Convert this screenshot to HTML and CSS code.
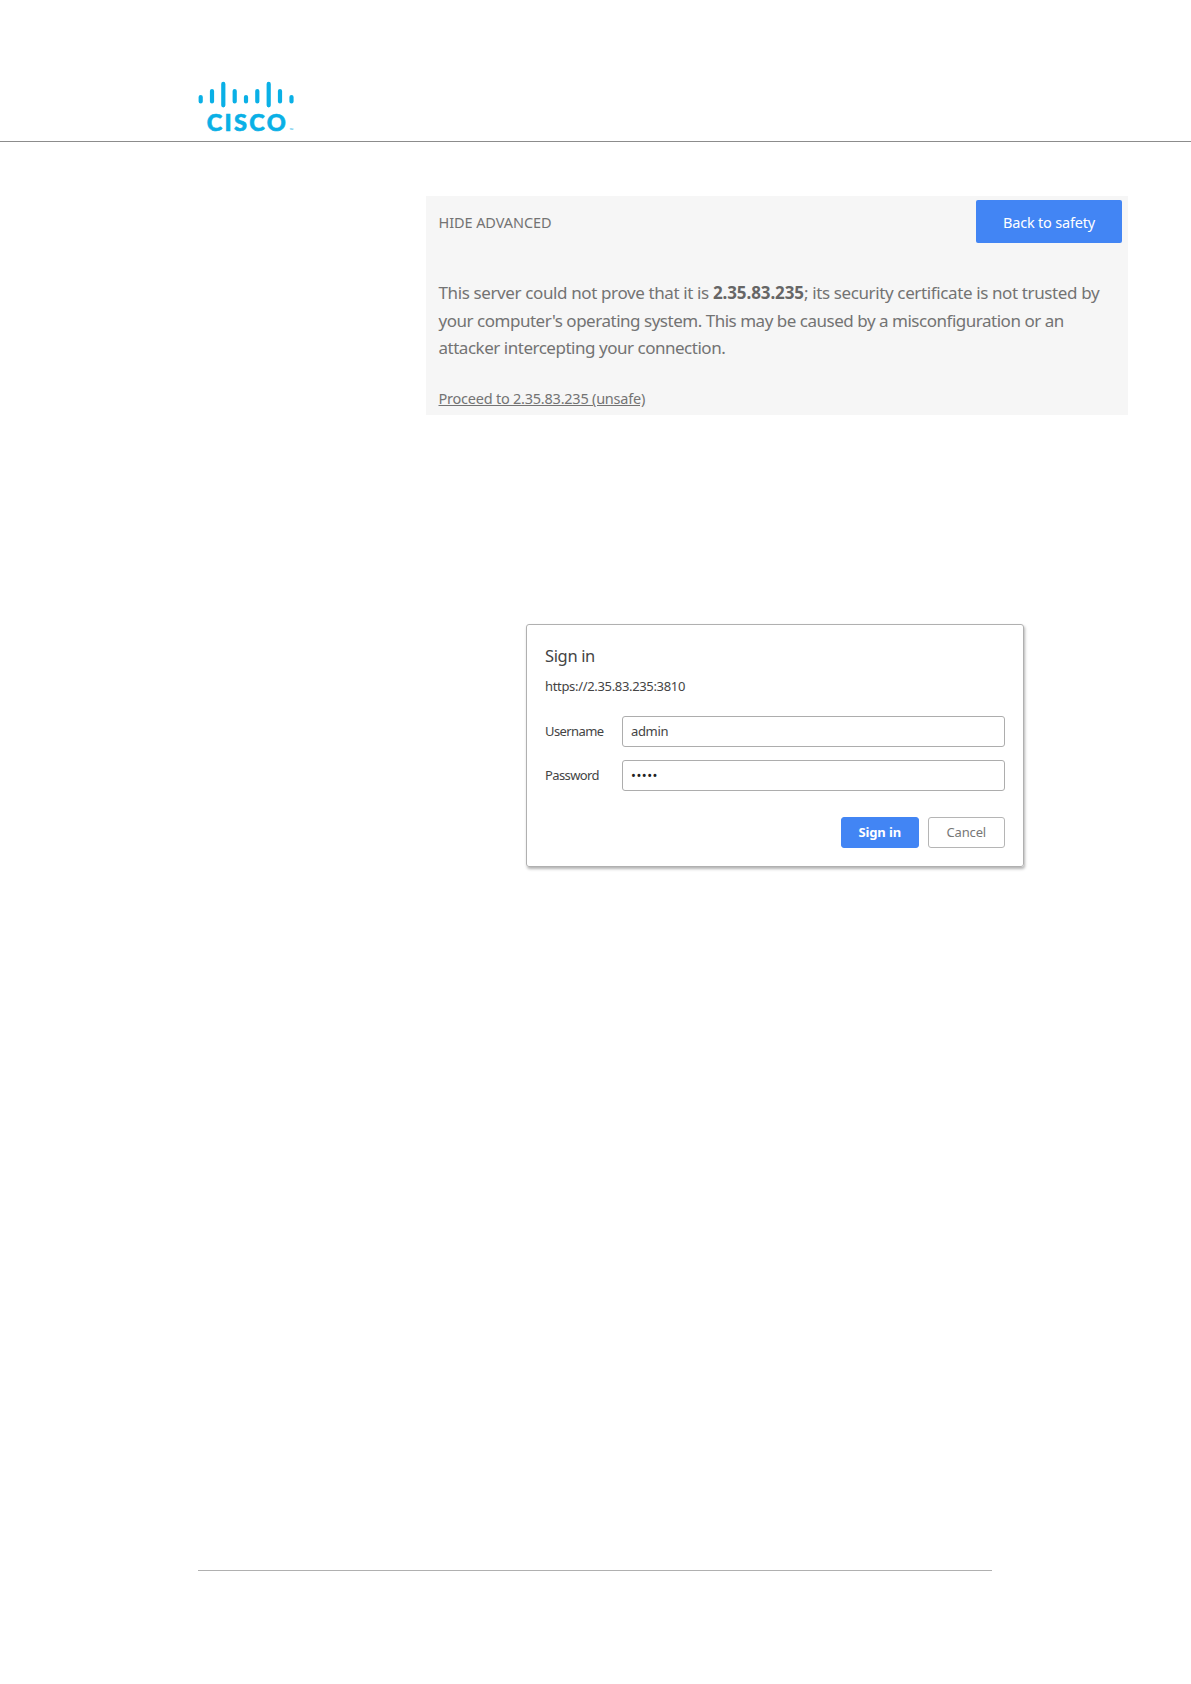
FILE: index.html
```html
<!DOCTYPE html>
<html lang="en">
<head>
    <meta charset="UTF-8">
    <meta name="viewport" content="width=device-width, initial-scale=1.0">
    <title>Cisco</title>
    <link rel="stylesheet" href="styles.css">
</head>
<body>
    <header class="page-header">
        <svg class="logo" width="104" height="60" viewBox="0 0 104 60" role="img" aria-label="Cisco">
            <path class="bars" d="M4.7 18.1v4.4M16 12v10.5M27.3 4.9v21.4M38.7 12v10.5M50 18.1v4.4M61.3 12v10.5M72.7 4.9v21.4M84 12v10.5M95.5 18.1v4.4"/>
            <text class="wordmark" x="10.8" y="52.3" textLength="79" lengthAdjust="spacing">CISCO</text>
            <text class="tm" x="93.5" y="53">™</text>
        </svg>
    </header>

    <main>
        <section class="warning">
            <div class="warning-top">
                <span class="hide-link">HIDE ADVANCED</span>
                <button class="safety">Back to safety</button>
            </div>
            <p class="message">
                <span class="line-one">This server could not prove that it is <b>2.35.83.235</b>; its security certificate is not trusted by</span><br>
                <span class="line-two">your computer's operating system. This may be caused by a misconfiguration or an</span><br>
                <span class="line-three">attacker intercepting your connection.</span>
            </p>
            <a class="proceed">Proceed to 2.35.83.235 (unsafe)</a>
        </section>

        <form class="signin">
            <h1>Sign in</h1>
            <div class="host">https://2.35.83.235:3810</div>
            <div class="row">
                <label>Username</label>
                <div class="field">admin</div>
            </div>
            <div class="row">
                <label>Password</label>
                <div class="field dots">•••••</div>
            </div>
            <div class="actions">
                <button type="button" class="primary">Sign in</button>
                <button type="button">Cancel</button>
            </div>
        </form>
    </main>

    <footer></footer>
</body>
</html>
```
FILE: styles.css
```css
* {
    margin: 0;
    padding: 0;
    box-sizing: border-box;
}

body {
    display: flex;
    flex-direction: column;
    height: 1684px;
    background: #fff;
    font-family: "Noto Sans", "Open Sans", sans-serif;
    overflow: hidden;
}

/* Header */
.page-header {
    height: 142px;
    padding: 79px 0 0 196px;
    border-bottom: 1px solid #8c8c8c;
}

.logo {
    display: block;
}

.bars {
    fill: none;
    stroke: #0ab0e6;
    stroke-width: 4.2;
    stroke-linecap: round;
}

.wordmark {
    fill: #0ab0e6;
    stroke: #0ab0e6;
    stroke-width: 0.6;
    font: 900 23.5px Lato, sans-serif;
}

.tm {
    fill: #0ab0e6;
    font: 5px "Open Sans", sans-serif;
}

main {
    flex: 1;
}

/* Certificate warning */
.warning {
    width: 702px;
    height: 219px;
    margin: 54px 0 0 426px;
    padding: 4px 6px 0 12.5px;
    background: #f6f6f6;
    color: #737373;
}

.warning-top {
    display: flex;
    justify-content: space-between;
    align-items: center;
    height: 43px;
}

.hide-link {
    padding-top: 1px;
    font-size: 14.5px;
    letter-spacing: -0.08px;
}

.safety {
    width: 146px;
    height: 43px;
    border: none;
    border-radius: 2px;
    background: #4285f4;
    color: #fff;
    font: 14.5px "Noto Sans", sans-serif;
    letter-spacing: -0.2px;
}

.message {
    margin-top: 36px;
    font-size: 17px;
    line-height: 27.7px;
    white-space: nowrap;
}

.line-one {
    letter-spacing: -0.38px;
}

.line-two,
.line-three {
    letter-spacing: -0.48px;
}

.message b {
    color: #666;
    letter-spacing: -0.1px;
}

.proceed {
    display: block;
    margin-top: 25px;
    font-size: 14.5px;
    line-height: 22px;
    letter-spacing: -0.23px;
    text-decoration: underline;
}

/* Sign in dialog */
.signin {
    width: 498px;
    height: 243px;
    margin: 209px 0 0 526px;
    padding: 21px 18px 0;
    border: 1px solid #b0b0b0;
    border-radius: 3px;
    box-shadow: 1px 2px 3px rgba(0, 0, 0, 0.3);
    color: #444;
    font-size: 13px;
}

.signin h1 {
    font-size: 16.5px;
    font-weight: 400;
    line-height: 20px;
    letter-spacing: -0.35px;
}

.host {
    margin: 9px 0 19px;
    line-height: 22px;
    letter-spacing: -0.33px;
}

.row {
    display: flex;
    align-items: center;
    height: 31px;
    margin-bottom: 13px;
}

.row label {
    width: 77px;
    padding-bottom: 1px;
    letter-spacing: -0.6px;
}

.field {
    flex: 1;
    height: 31px;
    padding-left: 8px;
    border: 1px solid #adadad;
    border-radius: 3px;
    line-height: 29px;
    letter-spacing: -0.35px;
}

.dots {
    font-size: 13px;
    letter-spacing: 0.5px;
    color: #222;
}

.actions {
    display: flex;
    justify-content: flex-end;
    gap: 9px;
    margin-top: 26px;
}

.actions button {
    width: 77.5px;
    height: 31px;
    border: 1px solid #b5b5b5;
    border-radius: 3px;
    background: #fff;
    color: #777;
    font: 13px/27px "Noto Sans", sans-serif;
    letter-spacing: -0.15px;
}

.actions .primary {
    border-color: #4285f4;
    background: #4285f4;
    color: #fff;
    font-weight: 700;
}

/* Footer rule */
footer {
    width: 794px;
    height: 114px;
    margin-left: 198px;
    border-top: 1px solid #b0b0b0;
}
```
